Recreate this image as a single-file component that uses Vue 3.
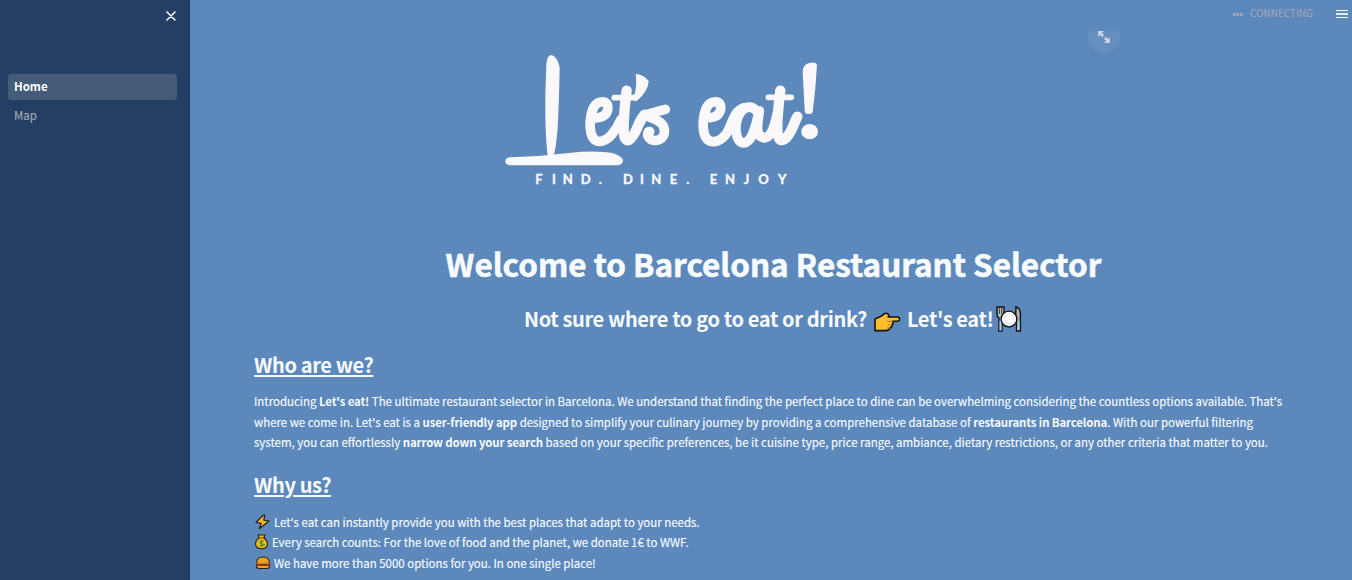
<script setup>
const pages = ['Home', 'Map']
const current = 'Home'
</script>

<template>
  <div class="app">
    <aside class="sidebar">
      <button class="close" aria-label="Close sidebar">
        <svg width="10" height="10" viewBox="0 0 10 10"><path d="M1 1 9 9M9 1 1 9" stroke="#fff" stroke-width="1.5" stroke-linecap="round" /></svg>
      </button>
      <nav>
        <a v-for="page in pages" :key="page" :class="{ active: page === current }">{{ page }}</a>
      </nav>
    </aside>

    <main class="main">
      <header class="toolbar">
        <svg class="dots" width="10" height="3" viewBox="0 0 10 3" fill="#a0a5b9"><path d="M0 0h2.6v3H0zM3.6 0h2.6v3H3.6zM7.2 0h2.6v3H7.2z" /></svg>
        <span class="status">CONNECTING</span>
        <svg class="menu" width="12" height="8" viewBox="0 0 12 8"><path d="M0 .5h12M0 7.5h12" stroke="#fff" /><path d="M0 4h12" stroke="#e1e9f2" stroke-width="2" /></svg>
      </header>
      <div class="expand">
        <svg width="32" height="21" viewBox="0 0 32 21">
          <circle cx="16" cy="5.5" r="16" fill="#668fc0" />
          <path d="M10 0h6l-2 2 2.2 2.2-2 2L12 4l-2 2zM22 12h-6l2-2-2.2-2.2 2-2L20 8l2-2z" fill="#c3d3e7" />
        </svg>
      </div>

      <svg class="logo" width="335" height="150" viewBox="0 0 1005 450" fill="#faf8fa">
        <path d="M168 30Q186 31 194 67C193 130 191 190 188 250Q184 300 177 329L158 331Q150 270 151 150L154 58Q156 32 168 30Z" />
        <path d="M45 337 130 333 260 320Q320 317 355 325Q383 335 384 347Q383 358 368 361H42Q30 356 31 348Q32 339 45 337Z" />
        <g fill="none" stroke="#faf8fa" stroke-width="29" stroke-linecap="round" stroke-linejoin="round">
          <path d="M302 219Q333 217 338 195Q342 169 318 171C285 174 280 244 291 273C304 301 333 289 350 269Q368 248 378 223" />
          <path d="M395 137Q386 205 386 251Q386 291 402 285C425 270 427 232 449 209" stroke-width="31" />
          <path d="M358 158H420M820 157H889" stroke-width="17" />
          <path d="M511 193Q475 202 450 210C478 222 512 231 508 263C504 291 465 295 458 270Q457 260 464 260" />
          <path d="M646 218Q673 215 677 193Q680 169 657 171C624 174 619 244 630 273C643 301 674 291 690 271C712 248 710 200 748 188" />
          <path d="M785 198Q762 174 738 200C713 235 721 294 746 294C777 290 783 232 793 198C788 236 779 273 807 279C831 276 838 243 847 205" />
          <path d="M856 137Q846 218 847 254Q849 296 869 282C890 268 897 232 907 215" stroke-width="31" />
        </g>
        <path d="M422 87Q446 88 461 108Q460 140 425 168Q413 166 415 158Q428 126 422 87Z" />
        <path d="M923 82Q923 61 940 55Q962 48 966 59Q962 134 953 201Q951 208 937 207Q929 205 929 195Z" />
        <ellipse cx="944" cy="260" rx="25" ry="23" />
        <text y="416" x="121 171 203 257 311 384 435 469 524 574 644 690 746 790 849">FIND.DINE.ENJOY</text>
      </svg>

      <h1><span>Welcome to Barcelona Restaurant Selector</span></h1>
      <h3 class="tagline">
        <span class="question">Not sure where to go to eat or drink?</span>
        <svg class="hand" width="28" height="20" viewBox="0 0 28 20"><path d="M2 7Q8 5 12 1.4 15 .5 16 4L15 5H24.5Q27 5.5 26.5 8 26 9.3 24 9.3H19.5Q21 11.5 19 13 19 15.5 17 16 16 18.6 13 18.6H2Z" fill="#fdbd2c" stroke="#11130f" stroke-width="1.6" stroke-linejoin="round" /><path d="M14 9.4h6M15 13h4M14 16h3" stroke="#b87818" /></svg>
        <span class="eat">Let's eat!</span>
        <svg class="plate" width="26" height="27" viewBox="0 0 26 27">
          <path d="M1 1V8Q1 11 3 12V25H6V12Q8 11 8 8V1Z" fill="#bdc0c4" stroke="#111" stroke-width="1.4" />
          <path d="M3.3 1v7M5.7 1v7" stroke="#333" /><path d="M4.5 15v9.5" stroke="#9fd3f6" stroke-width="2" />
          <path d="M20 1Q24 2 24.4 7V25H20.5V15H19.5Z" fill="#aeb4ba" stroke="#111" stroke-width="1.4" /><path d="M22.5 15v9" stroke="#9fd3f6" stroke-width="2" />
          <circle cx="13" cy="13" r="7.9" fill="#fff" stroke="#111" stroke-width="1.4" /><circle cx="13" cy="13" r="5" fill="none" stroke="#ddd" stroke-width=".8" />
        </svg>
      </h3>

      <h3 class="heading who">Who are we?</h3>
      <div class="copy">
        <p>Introducing <b>Let's eat!</b> The ultimate restaurant selector in Barcelona. We understand that finding the perfect place to dine can be overwhelming considering the countless options available. That's</p>
        <p>where we come in. Let's eat is a <b>user-friendly app</b> designed to simplify your culinary journey by providing a comprehensive database of <b>restaurants in Barcelona</b>. With our powerful filtering</p>
        <p>system, you can effortlessly <b>narrow down your search</b> based on your specific preferences, be it cuisine type, price range, ambiance, dietary restrictions, or any other criteria that matter to you.</p>
      </div>

      <h3 class="heading why">Why us?</h3>
      <div class="copy reasons">
        <p>
          <svg width="17" height="16" viewBox="0 0 17 16"><path d="M9.3 1.2 2 8.5 7.2 9.3 5.4 14.8 15 7 9.8 6.2 10.6 1.2Z" fill="#fbb62b" stroke="#1c2020" stroke-width="1.2" stroke-linejoin="round" /></svg>
          <span>Let's eat can instantly provide you with the best places that adapt to your needs.</span>
        </p>
        <p>
          <svg width="15" height="16" viewBox="0 0 15 16"><path d="M4.2 1H10.8L9.9 4C13 6 14 9 13 12Q12 14.7 7.5 14.7T2 12C1 9 2 6 5.2 4Z" fill="#f2b619" stroke="#26251c" stroke-width="1.1" /><path d="M4.8 4H10" stroke="#6b4a16" /><path d="M9.5 7.4Q5.5 6 5.5 8T9.5 10.3 5.5 12M7.5 6v7" fill="none" stroke="#35922e" /></svg>
          <span>Every search counts: For the love of food and the planet, we donate 1€ to WWF.</span>
        </p>
        <p>
          <svg width="17" height="16" viewBox="0 0 17 16"><path d="M2.6 8Q2.8 2 9 2T15.4 8L15.6 12Q15 13.5 13 13.5H5Q3 13.5 2.4 12Z" fill="#eea51c" stroke="#272316" stroke-width="1.1" /><path d="M2.3 10H15.7" stroke="#813b20" stroke-width="2" /><path d="M2.3 8.3H15.7" stroke="#c96a32" /></svg>
          <span>We have more than 5000 options for you. In one single place!</span>
        </p>
      </div>
    </main>
  </div>
</template>

<style>
body { margin: 0; overflow: hidden; }
</style>

<style scoped>
.app { display: flex; width: 1352px; height: 580px; overflow: hidden; background: #5c88bb; color: #f7fbff; font-family: "Noto Sans CJK JP", "Noto Sans CJK SC", sans-serif; font-size: 11.46px; }
svg { display: block; flex: none; }
.sidebar { box-sizing: border-box; width: 190px; flex: none; padding: 11px 13px 0 8px; background: #243f63; }
.close { display: block; width: 10px; height: 10px; margin: 0 1px 53px auto; padding: 0; border: 0; background: none; }
nav { display: flex; flex-direction: column; gap: 3px; }
nav a { box-sizing: border-box; height: 26px; padding-left: 6px; border-radius: 3px; line-height: 24px; color: #a2a9b2; -webkit-text-stroke: .15px; }
nav a.active { background: #465b79; color: #fff; font-weight: 700; -webkit-text-stroke: 0; }
.main { display: flex; flex: 1; flex-direction: column; padding-left: 64px; min-width: 0; }
.toolbar { display: flex; align-items: center; justify-content: flex-end; height: 25px; padding: 0 4px 3px 0; }
.dots { margin-top: 3px; }
.status { margin: 0 23px 0 7px; color: #a0a5b9; font-size: 10px; line-height: 12px; -webkit-text-stroke: .15px; }
.menu { margin-top: 3px; }
.expand { height: 21px; padding: 3px 0 0 834px; }
.logo { margin: -7px 0 0 241px; }
.logo text { font: 700 39px Lato, sans-serif; stroke: #faf8fa; stroke-width: 1px; }
h1, h3, p { margin: 0; white-space: nowrap; }
h1 { width: 1039px; height: 42px; margin-top: 48px; text-align: center; font-size: 31.46px; line-height: 42px; font-weight: 700; -webkit-text-stroke: .6px; }
h3 { font-size: 20.05px; line-height: 27px; font-weight: 700; letter-spacing: -.37px; }
.tagline { display: flex; align-items: center; height: 27px; margin: 21px 0 0 270px; }
.question, .eat { margin-top: -2px; }
.hand { margin: 5px 0 0 6px; }
.eat { margin-left: 6px; }
.plate { margin-left: 2px; }
.heading { align-self: flex-start; text-decoration: underline; text-decoration-thickness: 2px; text-underline-offset: 2px; }
.who { margin-top: 18px; }
.why { margin-top: 18px; }
.copy { margin-top: 13px; line-height: 20.5px; -webkit-text-stroke: .15px; }
.copy b { letter-spacing: -.14px; -webkit-text-stroke: 0; }
.copy p { height: 20.5px; }
.why + .copy { margin-top: 14px; }
.reasons p { display: flex; align-items: center; }
.reasons span { margin-left: 3px; }
</style>
